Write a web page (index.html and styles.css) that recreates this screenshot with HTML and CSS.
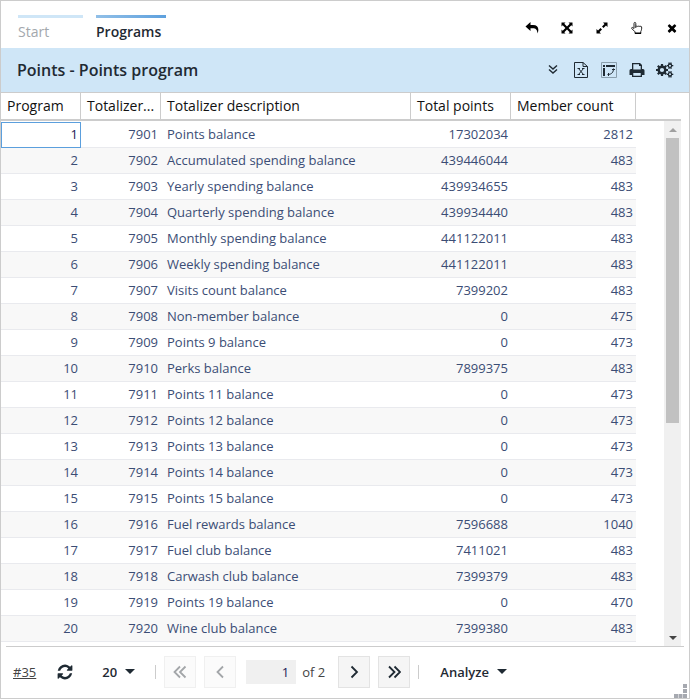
FILE: index.html
```html
<!DOCTYPE html>
<html lang="en">
<head>
<meta charset="utf-8">
<title>Points - Points program</title>
<link rel="stylesheet" href="styles.css">
</head>
<body>
<div class="window">
  <header class="topbar">
    <nav class="tabs">
      <a class="tab" href="#start">Start</a>
      <a class="tab tab-active" href="#programs">Programs</a>
    </nav>
    <div class="window-tools">
      <button type="button" aria-label="Back"><svg width="14" height="12" viewBox="0 0 14 12"><path d="M.5 4.500 5.500 0V3H8c5 0 6.500 3.500 4.500 8.500C12.300 7.500 10.500 6.200 8 6.200H5.500v2.800z"/></svg></button>
      <button type="button" aria-label="Full size"><svg width="12" height="12" viewBox="0 0 12 12"><path d="M.5.5h4L3.300 1.700 6 4.400l2.700-2.700L7.500.5h4v4l-1.200-1.200L7.600 6l2.700 2.700 1.200-1.200v4h-4l1.200-1.200L6 7.600l-2.700 2.700 1.200 1.200h-4v-4l1.200 1.200L4.400 6 1.700 3.300.5 4.500z"/></svg></button>
      <button type="button" aria-label="Expand"><svg width="12" height="12" viewBox="0 0 12 12"><path d="M7 .5h4.500V5L10 3.500 7.500 6 6 4.500 8.500 2zM5 11.500H.5V7L2 8.500 4.500 6 6 7.500 3.500 10z"/></svg></button>
      <button type="button" aria-label="Pointer"><svg width="12" height="14" viewBox="0 0 12 14"><path class="line" d="M4.800 7V2.500c0-1.500-1.800-1.500-1.800 0v5L1.800 6.600C.9 6 .2 7 1 7.800l3 3v1.700h5.800v-2c.8-1.500 1-3 .8-4.500-.2-1-1.500-1-1.700-.2-.2-1-1.700-1.100-2-.1-.3-.8-1.800-.9-2.100 0"/><path d="M4 11.500h6v1.500H4z"/></svg></button>
      <button type="button" aria-label="Close"><svg width="10" height="10" viewBox="190 190 1412 1412"><path d="M1490 1322q0 40-28 68l-136 136q-28 28-68 28t-68-28l-294-294-294 294q-28 28-68 28t-68-28l-136-136q-28-28-28-68t28-68l294-294-294-294q-28-28-28-68t28-68l136-136q28-28 68-28t68 28l294 294 294-294q28-28 68-28t68 28l136 136q28 28 28 68t-28 68l-294 294 294 294q28 28 28 68z"/></svg></button>
    </div>
  </header>

  <div class="titlebar">
    <h1>Points - Points program</h1>
    <div class="title-tools">
      <button type="button" aria-label="Show more"><svg width="10" height="10" viewBox="0 0 10 10"><path class="line chevrons" d="M1 .5 5 4l4-3.500M1 4.500 5 8l4-3.500"/></svg></button>
      <button type="button" aria-label="Export to Excel"><svg width="14" height="16" viewBox="0 0 14 16"><path class="line" d="M.5.5h8.500l4.500 4v11H.5zM9 .5v4h4.500M4.500 6.500l5 6M9.500 6.500l-5 6M3.500 6.500h2.500M8 6.500h2.500M3.500 12.500h2.500M8 12.500h2.500"/></svg></button>
      <button type="button" aria-label="Pivot table"><svg width="16" height="16" viewBox="0 0 16 16"><path class="frame" d="M.5.5h15v15H.5z"/><path d="M2 3h2v2H2zM5 3h9v2H5zM2 6h2v8H2z"/><path class="line" d="M12.500 6.500c0 3.500-1.500 6-6 6M11 7.500h3M7.500 11v3"/></svg></button>
      <button type="button" aria-label="Print"><svg width="16" height="14" viewBox="0 0 16 14"><path fill-rule="evenodd" d="M3 0h8l2 2v4h1q1.500 0 1.500 1.500V12H13v2H3v-2H.5V7.500Q.5 6 2 6h1zM4.300 1.300V6.500h7.400V3H10V1.300zM4.300 10v2.700h7.400V10z"/></svg></button>
      <button type="button" aria-label="Settings"><svg width="18" height="16" viewBox="0 0 18 16"><circle class="gear" cx="6" cy="8" r="3.300"/><path class="teeth" d="M6 2v2.500M6 11.500V14M0 8h2.500M9.500 8H12M1.800 3.800l1.700 1.700M8.500 10.500l1.700 1.700M1.800 12.200l1.700-1.700M8.500 5.500l1.700-1.700"/><circle class="gear-small" cx="14" cy="3.700" r="1.700"/><circle class="gear-small" cx="14" cy="12.300" r="1.700"/><path class="teeth-small" d="M12.800.5l.5 1.500M15.200.5l-.5 1.500M12.800 6.900l.5-1.500M15.200 6.900l-.5-1.500M10.700 3.700h1.500M15.800 3.700h1.500M12.800 9.100l.5 1.500M15.200 9.100l-.5 1.500M12.800 15.500l.5-1.500M15.200 15.500l-.5-1.500M10.700 12.300h1.500M15.800 12.300h1.500"/></svg></button>
    </div>
  </div>

  <main class="grid">
    <table>
      <colgroup><col class="col-id"><col class="col-id"><col><col class="col-points"><col class="col-count"><col class="col-rest"></colgroup>
      <thead>
        <tr><th scope="col">Program</th><th scope="col">Totalizer...</th><th scope="col">Totalizer description</th><th scope="col">Total points</th><th scope="col">Member count</th><td></td></tr>
      </thead>
      <tbody>
        <tr><td class="focused">1</td><td>7901</td><td>Points balance</td><td>17302034</td><td>2812</td></tr>
        <tr><td>2</td><td>7902</td><td>Accumulated spending balance</td><td>439446044</td><td>483</td></tr>
        <tr><td>3</td><td>7903</td><td>Yearly spending balance</td><td>439934655</td><td>483</td></tr>
        <tr><td>4</td><td>7904</td><td>Quarterly spending balance</td><td>439934440</td><td>483</td></tr>
        <tr><td>5</td><td>7905</td><td>Monthly spending balance</td><td>441122011</td><td>483</td></tr>
        <tr><td>6</td><td>7906</td><td>Weekly spending balance</td><td>441122011</td><td>483</td></tr>
        <tr><td>7</td><td>7907</td><td>Visits count balance</td><td>7399202</td><td>483</td></tr>
        <tr><td>8</td><td>7908</td><td>Non-member balance</td><td>0</td><td>475</td></tr>
        <tr><td>9</td><td>7909</td><td>Points 9 balance</td><td>0</td><td>473</td></tr>
        <tr><td>10</td><td>7910</td><td>Perks balance</td><td>7899375</td><td>483</td></tr>
        <tr><td>11</td><td>7911</td><td>Points 11 balance</td><td>0</td><td>473</td></tr>
        <tr><td>12</td><td>7912</td><td>Points 12 balance</td><td>0</td><td>473</td></tr>
        <tr><td>13</td><td>7913</td><td>Points 13 balance</td><td>0</td><td>473</td></tr>
        <tr><td>14</td><td>7914</td><td>Points 14 balance</td><td>0</td><td>473</td></tr>
        <tr><td>15</td><td>7915</td><td>Points 15 balance</td><td>0</td><td>473</td></tr>
        <tr><td>16</td><td>7916</td><td>Fuel rewards balance</td><td>7596688</td><td>1040</td></tr>
        <tr><td>17</td><td>7917</td><td>Fuel club balance</td><td>7411021</td><td>483</td></tr>
        <tr><td>18</td><td>7918</td><td>Carwash club balance</td><td>7399379</td><td>483</td></tr>
        <tr><td>19</td><td>7919</td><td>Points 19 balance</td><td>0</td><td>470</td></tr>
        <tr><td>20</td><td>7920</td><td>Wine club balance</td><td>7399380</td><td>483</td></tr>
      </tbody>
    </table>
    <div class="scrollbar">
      <span class="arrow arrow-up"></span>
      <span class="track"><span class="thumb"></span></span>
      <span class="arrow arrow-down"></span>
    </div>
  </main>

  <footer class="footer">
    <a class="record" href="#35">#35</a>
    <button class="refresh" type="button" aria-label="Refresh"><svg width="16" height="16" viewBox="64 64 1664 1664"><path d="M1639 1056q0 5-1 7-64 268-268 434.500t-478 166.500q-146 0-282.500-55t-243.500-157l-129 129q-19 19-45 19t-45-19-19-45v-448q0-26 19-45t45-19h448q26 0 45 19t19 45-19 45l-137 137q71 66 161 102t187 36q134 0 250-65t186-179q11-17 53-117 8-23 30-23h192q13 0 22.500 9.500t9.500 22.500zm25-800v448q0 26-19 45t-45 19h-448q-26 0-45-19t-19-45 19-45l138-138q-148-137-349-137-134 0-250 65t-186 179q-11 17-53 117-8 23-30 23h-199q-13 0-22.500-9.500t-9.500-22.500v-7q65-268 270-434.500t480-166.500q146 0 284 55.500t245 156.500l130-129q19-19 45-19t45 19 19 45z"/></svg></button>
    <span class="page-size"><select aria-label="Rows per page"><option>20</option></select></span>
    <span class="divider"></span>
    <button class="pager" type="button" aria-label="First page" disabled><svg width="14" height="14" viewBox="0 0 14 14"><path d="M7 1.500 1.500 7 7 12.500M12.500 1.500 7 7l5.500 5.500"/></svg></button>
    <button class="pager" type="button" aria-label="Previous page" disabled><svg width="14" height="14" viewBox="0 0 14 14"><path d="M10 1.500 4.500 7l5.500 5.500"/></svg></button>
    <label class="page"><input type="text" value="1" aria-label="Page"><span>of 2</span></label>
    <button class="pager" type="button" aria-label="Next page"><svg width="14" height="14" viewBox="0 0 14 14"><path d="M4.500 1.500 10 7l-5.500 5.500"/></svg></button>
    <button class="pager" type="button" aria-label="Last page"><svg width="14" height="14" viewBox="0 0 14 14"><path d="M2 1.500 7.500 7 2 12.500M7.500 1.500 13 7l-5.500 5.500"/></svg></button>
    <span class="divider"></span>
    <button class="analyze" type="button">Analyze</button>
    <svg class="resizer" width="14" height="14" viewBox="0 0 14 14"><path d="M9 0h4v4H9zM9 5h4v4H9zM4.500 10h4v4h-4zM9 10h4v4H9zM0 10h4v4H0z"/></svg>
  </footer>
</div>
</body>
</html>
```

FILE: styles.css
```css
* {
  box-sizing: border-box;
}

body {
  margin: 0;
  background: #fff;
  color: #1f2a33;
  font: 13px/20px "Open Sans", "Noto Sans", sans-serif;
}

button {
  padding: 0;
  border: 0;
  background: none;
  color: inherit;
  font: inherit;
}

.window {
  display: flex;
  flex-direction: column;
  min-height: 100vh;
  border: 1px solid #ccc;
}

/* Tabs and window buttons */
.topbar {
  display: flex;
  justify-content: space-between;
  height: 47px;
  padding-left: 17px;
}

.tabs {
  display: flex;
  gap: 13px;
  padding-top: 14px;
}

.tab {
  min-width: 65px;
  padding-top: 4px;
  color: #a3a8ad;
  font-size: 14px;
  text-decoration: none;
  border-top: 3px solid #cfe6f7;
}

.tab-active {
  min-width: 70px;
  color: #1f2a33;
  font-weight: 600;
  border-image: linear-gradient(90deg, #94c1e8, #5b9fdd) 3;
}

.window-tools,
.title-tools {
  display: flex;
  align-items: center;
}

.window-tools {
  padding-top: 16px;
  padding-bottom: 10px;
}

.window-tools button {
  display: grid;
  place-items: center;
  width: 35px;
}

.window-tools svg {
  fill: #000;
}

.window-tools .line {
  fill: none;
  stroke: #222;
}

/* Title */
.titlebar {
  display: flex;
  align-items: center;
  justify-content: space-between;
  height: 45px;
  padding: 0 10px 0 16px;
  background: #cfe6f7;
  border-bottom: 1px solid #ccc;
}

h1 {
  margin: 0;
  font-size: 16px;
  font-weight: 600;
}

.title-tools button {
  display: grid;
  place-items: center;
  width: 28px;
}

.title-tools svg {
  fill: #1f2a33;
}

.title-tools .line {
  fill: none;
  stroke: #1f2a33;
}

.title-tools .chevrons {
  stroke-width: 1.4;
}

.title-tools .frame {
  fill: none;
  stroke: #8b9fad;
}

.gear,
.gear-small,
.teeth,
.teeth-small {
  fill: none;
  stroke: #1f2a33;
}

.gear {
  stroke-width: 2.4;
}

.teeth {
  stroke-width: 2.2;
}

.gear-small,
.teeth-small {
  stroke-width: 1.3;
}

/* Data grid */
.grid {
  position: relative;
  flex: 1;
  margin-right: 8px;
}

table {
  width: 100%;
  table-layout: fixed;
  border-collapse: separate;
  border-spacing: 0;
}

.col-id {
  width: 80px;
}

.col-points {
  width: 100px;
}

.col-count {
  width: 125px;
}

.col-rest {
  width: 45px;
}

thead th,
thead td {
  height: 28px;
  padding: 0 0 0 6px;
  border-bottom: 2px solid #ccc;
}

thead th {
  color: #111;
  font-size: 14px;
  font-weight: 400;
  text-align: left;
  white-space: nowrap;
  border-right: 1px solid #ccc;
}

tbody::before {
  display: block;
  height: 1px;
  content: "";
}

tbody td {
  height: 26px;
  padding: 0 3px 2px 6px;
  color: #3b4d75;
  text-align: right;
  white-space: nowrap;
  border-bottom: 1px solid #e9eaee;
}

tbody td:nth-child(3) {
  text-align: left;
}

tbody tr:nth-child(even) td {
  background: #f8f8f8;
}

tbody .focused {
  color: #1d1b56;
  outline: 1px solid #5b9fdd;
  outline-offset: -1px;
}

.scrollbar {
  position: absolute;
  top: 28px;
  right: 0;
  bottom: 0;
  display: flex;
  flex-direction: column;
  width: 17px;
  background: #f0f0f0;
}

.arrow {
  display: grid;
  place-items: center;
  height: 17px;
}

.arrow::before {
  border: 4px solid transparent;
  content: "";
}

.arrow-up::before {
  margin-bottom: 4px;
  border-bottom-color: #a0a0a0;
}

.arrow-down::before {
  margin-top: 4px;
  border-top-color: #444;
}

.track {
  flex: 1;
  padding: 0 2px;
}

.thumb {
  display: block;
  height: 58%;
  background: #c1c1c1;
}

/* Footer */
.footer {
  position: relative;
  display: flex;
  align-items: center;
  height: 52px;
  margin: 0 5px;
  padding: 0 0 2px 7px;
  border-top: 1px solid #ccc;
}

.record {
  color: #444;
}

.refresh {
  display: grid;
  margin: 0 29px 0 21px;
}

.refresh svg {
  fill: #1f2a33;
}

.page-size,
.analyze {
  display: flex;
  align-items: center;
  gap: 8px;
  font-weight: 600;
}

.page-size::after,
.analyze::after {
  border: 5px solid transparent;
  border-top: 5px solid #1f2a33;
  border-bottom: 0;
  content: "";
}

.page-size select {
  padding: 0;
  border: 0;
  background: none;
  color: inherit;
  font: inherit;
  appearance: none;
}

.divider {
  width: 1px;
  height: 14px;
  margin-left: 20px;
  background: #ccc;
}

.pager {
  display: grid;
  flex: none;
  place-items: center;
  width: 32px;
  height: 32px;
  margin-left: 8px;
  border: 1px solid #e3e3e3;
  background: #f5f5f5;
}

.pager svg {
  fill: none;
  stroke: #1f2a33;
  stroke-width: 1.8;
}

.pager:disabled {
  border-color: #f0f0f0;
  background: #fbfbfb;
}

.pager:disabled svg {
  stroke: #a3a6a9;
}

.page {
  display: flex;
  align-items: center;
  gap: 6px;
  margin: 0 5px 0 10px;
  color: #444;
}

.page input {
  width: 50px;
  height: 24px;
  padding: 0 7px;
  border: 0;
  background: #f0f0f0;
  color: #1d1b56;
  font: inherit;
  text-align: right;
}

.pager + .divider {
  margin-left: 8px;
}

.analyze {
  margin-left: 21px;
}

.resizer {
  position: absolute;
  right: -4px;
  bottom: 0;
  fill: #a6a9b0;
}
```
